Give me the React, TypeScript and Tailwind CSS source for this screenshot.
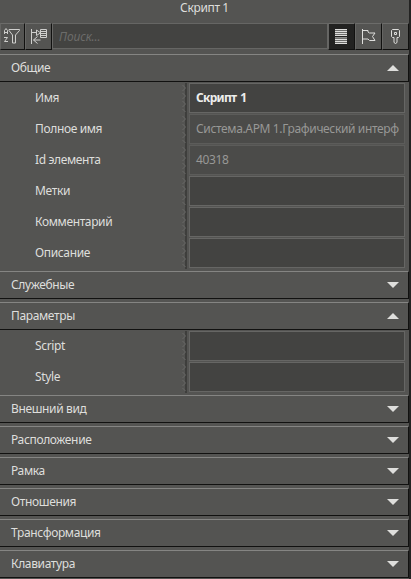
import React, { useState } from 'react'

type Field = { label: string; value?: string; kind?: 'strong' | 'readonly' }
type Section = { title: string; fields?: Field[] }

const sections: Section[] = [
  {
    title: 'Общие',
    fields: [
      { label: 'Имя', value: 'Скрипт 1', kind: 'strong' },
      { label: 'Полное имя', value: 'Система.АРМ 1.Графический интерф', kind: 'readonly' },
      { label: 'Id элемента', value: '40318', kind: 'readonly' },
      { label: 'Метки' },
      { label: 'Комментарий' },
      { label: 'Описание' }
    ]
  },
  { title: 'Служебные' },
  { title: 'Параметры', fields: [{ label: 'Script' }, { label: 'Style' }] },
  { title: 'Внешний вид' },
  { title: 'Расположение' },
  { title: 'Рамка' },
  { title: 'Отношения' },
  { title: 'Трансформация' },
  { title: 'Клавиатура' }
]

const SortFilterIcon = () => (
  <svg width="16" height="16" viewBox="0 0 16 16" fill="none" stroke="#cfcfcd">
    <path d="M.5 6V2.500L2 .5l1.500 2V6M.5 4.500h3M0 9.500h3.500l-3 4H4" />
    <path d="M5 1.500h10.500v1l-4 4.500v8h-3V7L5 2.500z" />
  </svg>
)

const TreeIcon = () => (
  <svg width="16" height="16" viewBox="0 0 16 16" fill="none" stroke="#cfcfcd">
    <path d="M.5 1v15M1 4.500h4M5.500 2v5.500l4-2.700z" />
    <path d="M9.500 1.500h6v8h-6zM9.500 3.500h6M9.500 5.500h6M9.500 7.500h6" />
    <path d="M6.500 8.500l-4 3.500 4 3.500M2.500 12h7" />
  </svg>
)

const RowsIcon = () => (
  <svg width="12" height="15" viewBox="0 0 12 15" fill="none" stroke="#dededc">
    <path d="M0 0h12v7H0zM0 8h12v7H0z" fill="#6e6e6c" stroke="none" />
    <path d="M0 .5h12M0 2.500h12M0 4.500h12M0 6.500h12M0 10.500h12M0 12.500h12M0 14.500h12" />
    <path d="M0 8.500h12" stroke="#8a8a88" />
  </svg>
)

const FlagIcon = () => (
  <svg width="14" height="15" viewBox="0 0 14 15" fill="none" stroke="#dededc">
    <path d="M.5 0v15M1 1.500h5v1.500l1.500 1H13l-2.500 3.500 2.500 4H7.500L6 10H1" />
  </svg>
)

const KeyIcon = () => (
  <svg width="9" height="15" viewBox="0 0 9 15" fill="none" stroke="#dededc">
    <path d="M.5 1.500l1-1h6l1 1v6l-1 1H6v5l-1.500 1-1.500-1v-5H1.500l-1-1z" />
    <path d="M3.500 3.500h2v2h-2z" />
  </svg>
)

const ToolButton = ({ children, className }: { children: React.ReactNode; className: string }) => (
  <button className={`flex h-[27px] shrink-0 items-start border border-t-[#6c6c6a] border-r-[#111110] border-b-[#111110] border-l-[#656563] ${className}`}>
    {children}
  </button>
)

const Row = ({ field }: { field: Field }) => (
  <div className="flex h-[30px] items-center">
    <span className="w-[182px] pl-[35px]">{field.label}</span>
    <svg width="7" height="31" viewBox="0 0 7 31" className="-mb-px shrink-0" fill="none">
      <path d="M4 0v31" stroke="#3e3e3c" strokeWidth="2" />
      <path d="M.5 2l3 3-3 3M.5 10l3 3-3 3M.5 18l3 3-3 3M.5 26l3 3" stroke="#686866" />
    </svg>
    <div
      className={`flex h-[30px] w-[216px] items-center overflow-hidden border px-[6px] pr-0 ${
        field.kind === 'readonly'
          ? 'border-[#5c5c5a] bg-[#4b4b49] text-[#989896]'
          : 'border-[#666664] bg-[#434341] text-[#eeeeec]'
      }`}
    >
      <span className={`whitespace-nowrap ${field.kind === 'strong' ? 'font-bold tracking-[-0.72px] [word-spacing:1.5px]' : ''}`}>
        {field.value}
      </span>
    </div>
  </div>
)

export default function App() {
  const [open, setOpen] = useState<string[]>(['Общие', 'Параметры'])

  const toggle = (title: string) => {
    setOpen(open.includes(title) ? open.filter((t) => t !== title) : [...open, title])
  }

  return (
    <div className="h-[579px] w-[411px] overflow-hidden bg-[#232322] font-['Noto_Sans','Open_Sans',sans-serif] text-[12px] leading-4 tracking-[-0.36px] text-[#dededc]">
      <div className="h-[579px] w-[409px] bg-[#545452]">
        <div className="flex h-[23px] justify-center">Скрипт 1</div>

        {/* Toolbar */}
        <div className="mb-1 flex h-[27px]">
          <ToolButton className="w-[25px] pt-[4px] pl-[3px]"><SortFilterIcon /></ToolButton>
          <ToolButton className="w-[27px] pt-[4px] pl-[5px]"><TreeIcon /></ToolButton>
          <input
            placeholder="Поиск..."
            className="h-[26px] w-[276px] min-w-0 border border-[#666664] bg-[#434341] px-[6px] tracking-[-0.1px] italic outline-none placeholder:text-[#6c6c6a]"
          />
          <ToolButton className="w-[27px] bg-[#222221] pt-[5px] pl-[6px]"><RowsIcon /></ToolButton>
          <ToolButton className="w-[27px] pt-[5px] pl-[6px]"><FlagIcon /></ToolButton>
          <ToolButton className="w-[27px] pt-[5px] pl-[8px]"><KeyIcon /></ToolButton>
        </div>

        {sections.map((section) => {
          const expanded = open.includes(section.title)
          return (
            <div key={section.title} className="pb-[3px]">
              <button
                onClick={() => toggle(section.title)}
                className="flex h-7 w-full items-center justify-between border-t border-r border-b border-t-[#858583] border-r-[#111110] border-b-[#111110] pr-[9px] pl-[11px]"
              >
                <span>{section.title}</span>
                <svg width="12" height="6" viewBox="0 0 12 6" fill="#dededc">
                  <path d={expanded ? 'M0 6L6 0l6 6z' : 'M0 0h12L6 6z'} />
                </svg>
              </button>
              {expanded && section.fields && (
                <div className="flex flex-col gap-px pt-px">
                  {section.fields.map((field) => (
                    <Row key={field.label} field={field} />
                  ))}
                </div>
              )}
            </div>
          )
        })}
      </div>
    </div>
  )
}
